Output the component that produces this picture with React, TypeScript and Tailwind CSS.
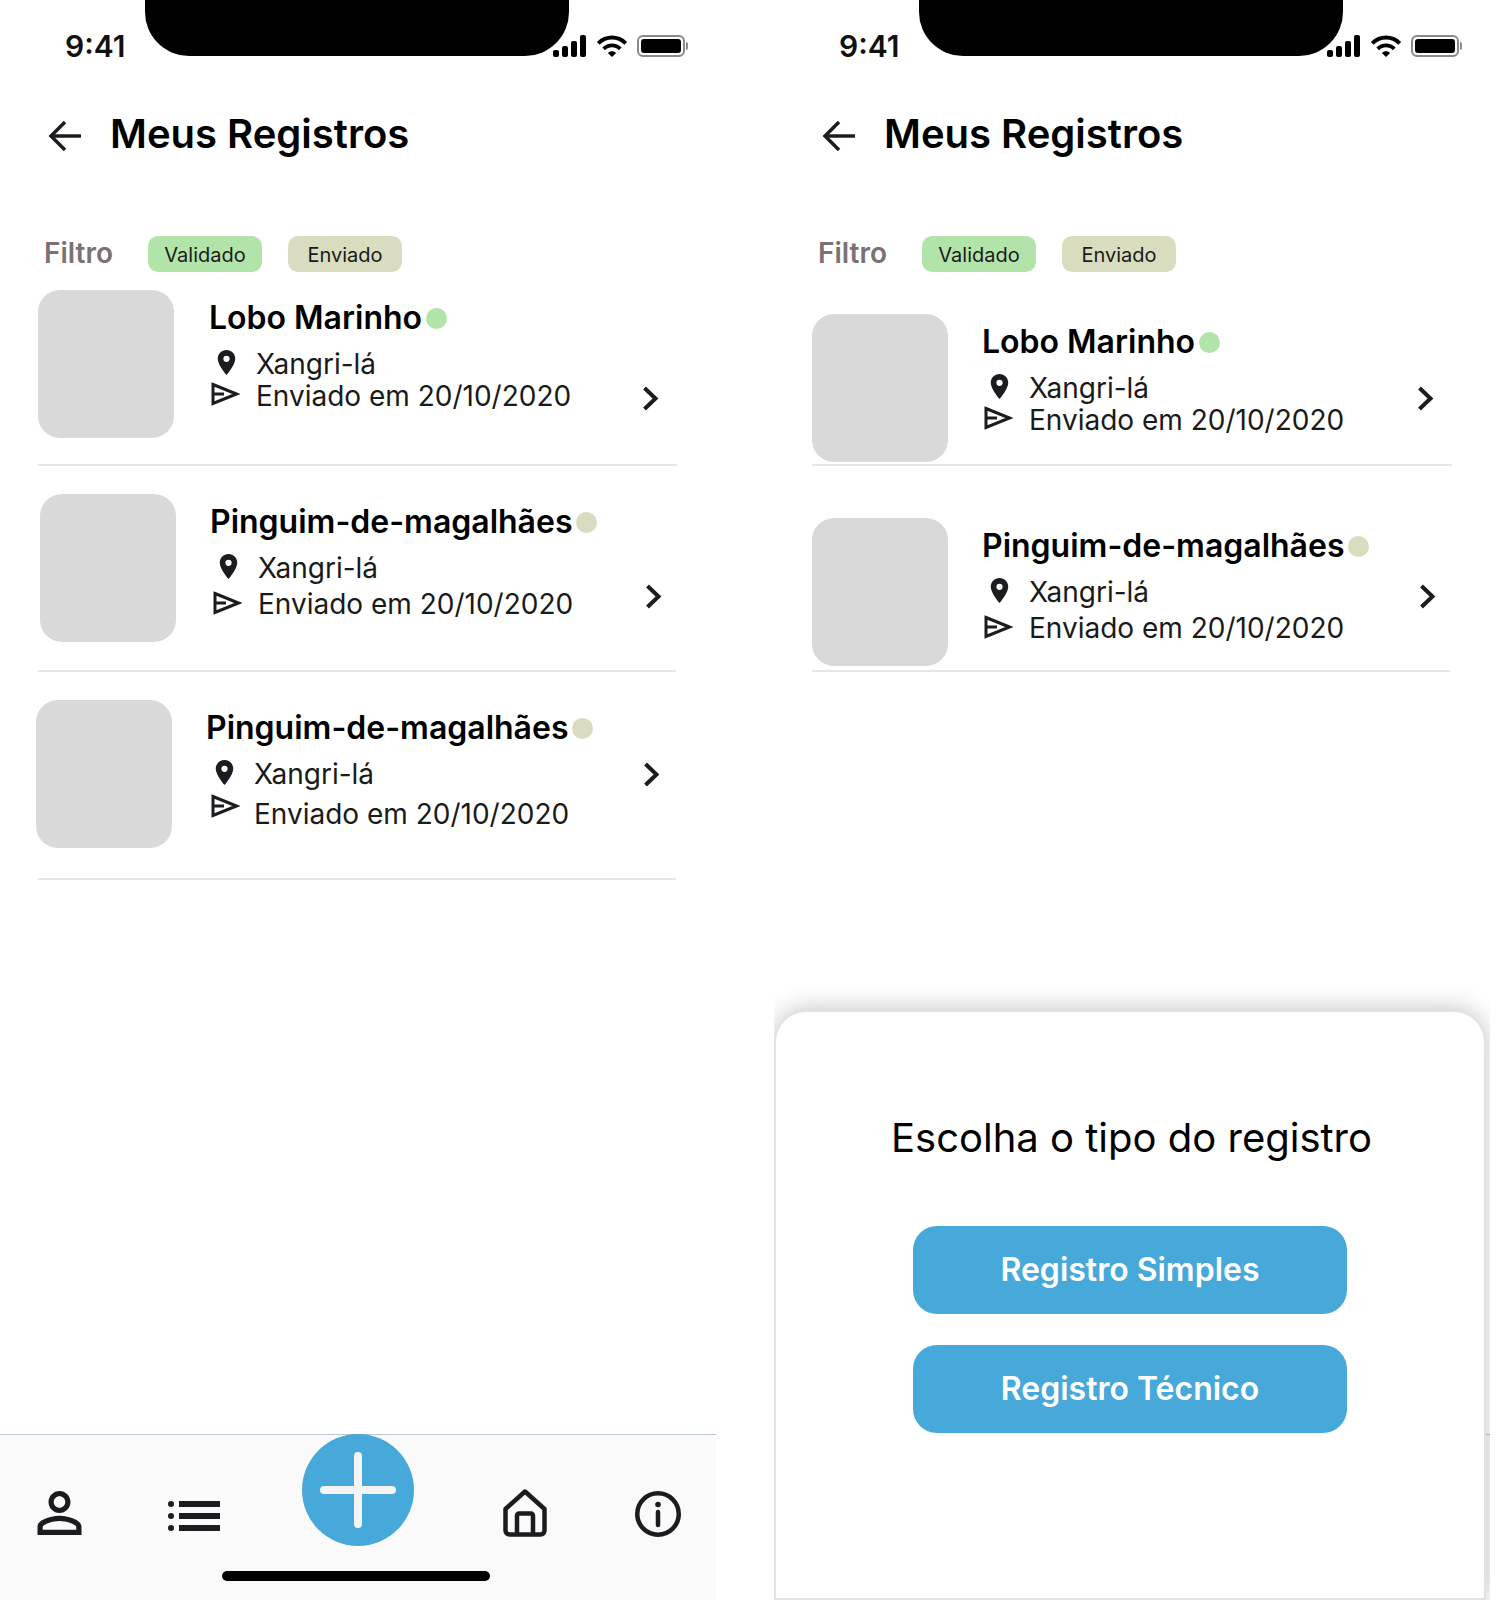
import type { ReactNode } from 'react'

const font = { fontFamily: 'Inter, sans-serif' }

function Signal() {
  return (
    <svg width="34" height="22" viewBox="0 0 34 22" fill="#000">
      <rect x="0" y="15" width="6" height="7" rx="2" />
      <rect x="9" y="11" width="6" height="11" rx="2" />
      <rect x="18" y="6" width="6" height="16" rx="2" />
      <rect x="27" y="0" width="6" height="22" rx="2" />
    </svg>
  )
}

function Wifi() {
  return (
    <svg width="32" height="22" viewBox="1 4 22 16" fill="#000">
      <path d="M1 9l2 2c4.97-4.97 13.03-4.97 18 0l2-2C16.93 2.93 7.08 2.93 1 9zm8 8l3 3 3-3c-1.65-1.66-4.34-1.66-6 0zm-4-4l2 2c2.76-2.76 7.24-2.76 10 0l2-2C15.14 9.14 8.87 9.14 5 13z" />
    </svg>
  )
}

function Battery() {
  return (
    <div className="flex items-center">
      <div className="w-[48px] h-[22px] rounded-[6px] border-2 border-[#8a8a8a] p-[2px]">
        <div className="w-full h-full rounded-[3px] bg-black" />
      </div>
      <div className="w-[2px] h-[8px] rounded-r-full bg-[#8a8a8a] ml-[1px]" />
    </div>
  )
}

function StatusBar() {
  return (
    <div className="relative h-[57px] flex items-end">
      <div className="absolute top-0 left-[145px] w-[424px] h-[56px] bg-black rounded-b-[44px]" />
      <span className="ml-[65px] text-[30px] leading-[30px] font-semibold text-[#111] mb-[-4px]">9:41</span>
      <div className="ml-auto mr-[28px] flex items-center">
        <Signal />
        <div className="ml-[9px]"><Wifi /></div>
        <div className="ml-[9px]"><Battery /></div>
      </div>
    </div>
  )
}

function Header() {
  return (
    <div className="flex items-center ml-[48px] mt-[57px] h-[40px]">
      <svg className="mt-[3px]" width="34" height="32" viewBox="0 0 34 32" fill="none" stroke="#1c1b1f" strokeWidth="3.5">
        <path d="M33 16H3" />
        <path d="M17 2L3 16l14 14" />
      </svg>
      <h1 className="ml-[28px] text-[40px] leading-[48px] font-semibold text-black whitespace-nowrap">Meus Registros</h1>
    </div>
  )
}

function Filters() {
  return (
    <div className="flex items-center ml-[44px] mt-[82px] h-[36px]">
      <span className="text-[28px] leading-[36px] font-semibold text-[#7a7272] w-[104px] -mt-[3px]">Filtro</span>
      <span className="w-[114px] h-[36px] rounded-[10px] bg-[#b2e4a9] text-[20px] leading-[38px] text-center text-[#1a1a1a]">Validado</span>
      <span className="ml-[26px] w-[114px] h-[36px] rounded-[10px] bg-[#d9dcbf] text-[20px] leading-[38px] text-center text-[#1a1a1a]">Enviado</span>
    </div>
  )
}

function Pin() {
  return (
    <svg className="ml-[8px] mt-[2px]" width="19" height="25" viewBox="5 2 14 20" fill="#1c1b1f">
      <path d="M12 2C8.13 2 5 5.13 5 9c0 5.25 7 13 7 13s7-7.75 7-13c0-3.87-3.13-7-7-7zm0 9.5a2.5 2.5 0 0 1 0-5 2.5 2.5 0 0 1 0 5z" />
    </svg>
  )
}

function Send({ className }: { className: string }) {
  return (
    <svg className={className} width="29" height="24" viewBox="0 0 29 24" fill="none" stroke="#1c1b1f" strokeWidth="3">
      <path d="M2 2.500L25.500 12 2 21.500z" />
      <path d="M2 12h11" />
    </svg>
  )
}

function Chevron({ className }: { className: string }) {
  return (
    <svg className={className} width="17" height="25" viewBox="0 0 17 25" fill="none" stroke="#1c1b1f" strokeWidth="4">
      <path d="M2.500 2l11 10.500-11 10.500" />
    </svg>
  )
}

function Meta({ icon, text, className }: { icon: ReactNode; text: string; className?: string }) {
  return (
    <div className={`flex h-[32px] ${className ?? ''}`}>
      <div className="w-[47px] shrink-0">{icon}</div>
      <span className="text-[28px] leading-[32px] text-[#1a1a1a] whitespace-nowrap">{text}</span>
    </div>
  )
}

type ItemProps = {
  title: string
  dot: string
  rowClass: string
  thumbClass: string
  textClass: string
  titleClass: string
  sendRowClass: string
  sendIconClass: string
  chevronClass: string
}

function Item({ title, dot, rowClass, thumbClass, textClass, titleClass, sendRowClass, sendIconClass, chevronClass }: ItemProps) {
  return (
    <div className={`flex items-start border-b-2 border-[#e6e6e6] ${rowClass}`}>
      <div className={`w-[136px] h-[148px] shrink-0 rounded-[22px] bg-[#d9d9d9] ${thumbClass}`} />
      <div className={`pt-[8px] ${textClass}`}>
        <div className={`flex items-center h-[40px] ${titleClass}`}>
          <span className="text-[32px] leading-[40px] font-semibold text-black whitespace-nowrap">{title}</span>
          <div className={`ml-[4px] w-[21px] h-[21px] rounded-full ${dot}`} />
        </div>
        <Meta className="mt-[10px]" icon={<Pin />} text="Xangri-lá" />
        <Meta className={sendRowClass} icon={<Send className={sendIconClass} />} text="Enviado em 20/10/2020" />
      </div>
      <Chevron className={chevronClass} />
    </div>
  )
}

function BottomBar() {
  return (
    <div className="mt-auto h-[166px] bg-[#fafafa] border-t border-[#b9c5d2]">
      <div className="flex items-start h-[112px] pl-[37px]">
        <svg className="mt-[56px]" width="45" height="44" viewBox="4 4 16 16" fill="#1c1b1f">
          <path d="M12 5.9c1.16 0 2.1.94 2.1 2.1s-.94 2.1-2.1 2.1S9.9 9.16 9.9 8s.94-2.1 2.1-2.1m0 9c2.97 0 6.1 1.46 6.1 2.1v1.1H5.9V17c0-.64 3.13-2.1 6.1-2.1M12 4C9.79 4 8 5.79 8 8s1.79 4 4 4 4-1.79 4-4-1.79-4-4-4zm0 9c-2.67 0-8 1.34-8 4v3h16v-3c0-2.66-5.33-4-8-4z" />
        </svg>
        <svg className="ml-[86px] mt-[66px]" width="52" height="30" viewBox="0 0 52 30" fill="#1c1b1f">
          <circle cx="3" cy="3" r="3" />
          <circle cx="3" cy="15" r="3" />
          <circle cx="3" cy="27" r="3" />
          <rect x="11" y="0" width="41" height="6" />
          <rect x="11" y="12" width="41" height="6" />
          <rect x="11" y="24" width="41" height="6" />
        </svg>
        <button className="relative ml-[82px] -mt-px w-[112px] h-[112px] shrink-0 rounded-full bg-[#47a8da] flex items-center justify-center">
          <svg width="76" height="76" viewBox="0 0 76 76" fill="none" stroke="#f5f5f5" strokeWidth="8" strokeLinecap="round">
            <path d="M38 4v68M4 38h68" />
          </svg>
        </button>
        <svg className="ml-[89px] mt-[54px]" width="44" height="48" viewBox="0 0 44 48" fill="none" stroke="#1c1b1f" strokeWidth="4.500" strokeLinejoin="round">
          <path d="M22 2.500L2.500 20v21.500a4 4 0 0 0 4 4h31a4 4 0 0 0 4-4V20z" />
          <path d="M14 45V26.500a2 2 0 0 1 2-2h12a2 2 0 0 1 2 2V45" />
        </svg>
        <svg className="ml-[88px] mt-[56px]" width="46" height="46" viewBox="0 0 46 46" fill="none" stroke="#1c1b1f" strokeWidth="4.500">
          <circle cx="23" cy="23" r="20.750" />
          <path d="M23 21v13" strokeLinecap="round" />
          <circle cx="23" cy="13.500" r="2.800" fill="#1c1b1f" stroke="none" />
        </svg>
      </div>
      <div className="ml-[222px] mt-[24px] w-[268px] h-[10px] rounded-full bg-black" />
    </div>
  )
}

function Sheet() {
  return (
    <div className="absolute left-0 top-[1010px] w-[712px] h-[590px] bg-white rounded-t-[32px] border-2 border-[#e2e2e2] shadow-[0_-2px_24px_rgba(0,0,0,0.22)] flex flex-col items-center">
      <h2 className="mt-[102px] ml-[3px] text-[40px] leading-[48px] text-black whitespace-nowrap">Escolha o tipo do registro</h2>
      <button className="mt-[64px] w-[434px] h-[88px] rounded-[24px] bg-[#47a8da] text-white text-[32px] font-semibold">Registro Simples</button>
      <button className="mt-[31px] w-[434px] h-[88px] rounded-[24px] bg-[#47a8da] text-white text-[32px] font-semibold">Registro Técnico</button>
    </div>
  )
}

export default function App() {
  return (
    <div className="flex w-[1505px] h-[1600px] bg-white overflow-hidden" style={font}>
      {/* tela com tres registros */}
      <div className="relative w-[716px] h-full flex flex-col shrink-0">
        <StatusBar />
        <Header />
        <Filters />
        <div className="ml-[38px] mr-[39px] mt-[18px]">
          <Item
            title="Lobo Marinho"
            dot="bg-[#b2e4a9]"
            rowClass="h-[176px]"
            thumbClass=""
            textClass="ml-[35px]"
            titleClass=""
            sendRowClass="mt-0"
            sendIconClass="ml-[2px] mt-[2px]"
            chevronClass="ml-auto mr-[18px] mt-[96px]"
          />
          <Item
            title="Pinguim-de-magalhães"
            dot="bg-[#d9dcbf]"
            rowClass="h-[206px] pt-[28px] mr-[1px]"
            thumbClass="ml-[2px]"
            textClass="ml-[35px]"
            titleClass="-ml-[1px]"
            sendRowClass="mt-[4px]"
            sendIconClass="ml-[2px] mt-[3px]"
            chevronClass="ml-auto mr-[14px] mt-[90px]"
          />
          <Item
            title="Pinguim-de-magalhães"
            dot="bg-[#d9dcbf]"
            rowClass="h-[208px] pt-[28px] mr-[1px]"
            thumbClass="-ml-[2px]"
            textClass="ml-[35px]"
            titleClass="-ml-[1px]"
            sendRowClass="mt-[8px]"
            sendIconClass="ml-[4px] -mt-[4px]"
            chevronClass="ml-auto mr-[16px] mt-[62px]"
          />
        </div>
        <BottomBar />
      </div>

      {/* tela com o painel de tipo de registro */}
      <div className="relative ml-[58px] w-[716px] h-full flex flex-col shrink-0 overflow-hidden">
        <StatusBar />
        <Header />
        <Filters />
        <div className="ml-[38px] mr-[38px] mt-[18px]">
          <Item
            title="Lobo Marinho"
            dot="bg-[#b2e4a9]"
            rowClass="h-[176px] pt-[24px]"
            thumbClass=""
            textClass="ml-[34px]"
            titleClass=""
            sendRowClass="mt-0"
            sendIconClass="ml-[2px] mt-[2px]"
            chevronClass="ml-auto mr-[18px] mt-[72px]"
          />
          <Item
            title="Pinguim-de-magalhães"
            dot="bg-[#d9dcbf]"
            rowClass="h-[206px] pt-[52px] mr-[2px]"
            thumbClass=""
            textClass="ml-[34px]"
            titleClass=""
            sendRowClass="mt-[4px]"
            sendIconClass="ml-[2px] mt-[3px]"
            chevronClass="ml-auto mr-[14px] mt-[66px]"
          />
        </div>
        <BottomBar />
        <Sheet />
      </div>
    </div>
  )
}
